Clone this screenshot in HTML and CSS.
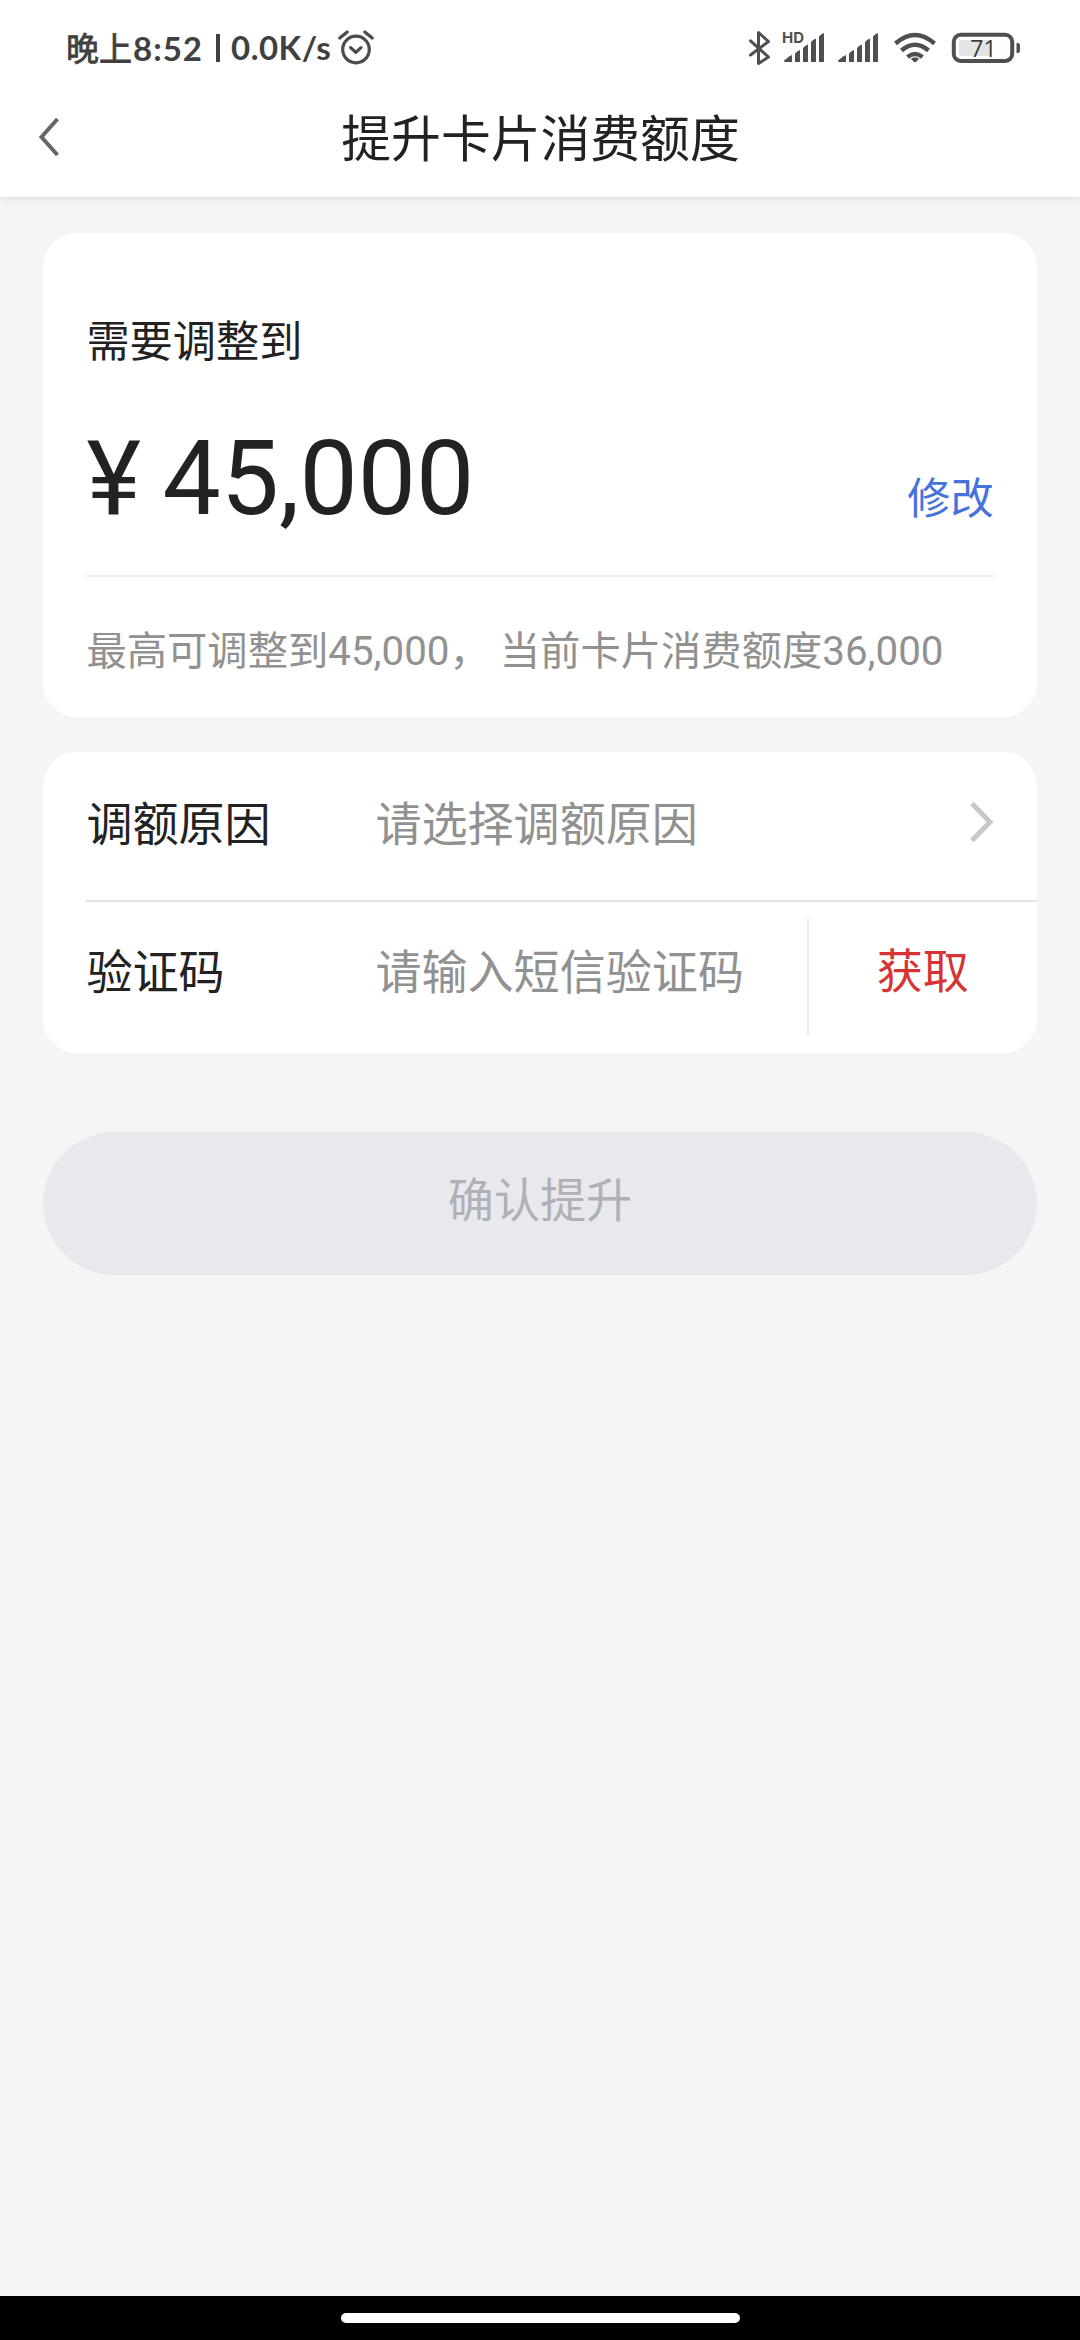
FILE: index.html
```html
<!DOCTYPE html>
<html lang="zh-CN">
<head>
<meta charset="utf-8">
<title>提升卡片消费额度</title>
<link rel="stylesheet" href="styles.css">
</head>
<body>
<div class="screen">
  <div class="statusbar">
    <div class="status-left">
      <span class="clock"><span class="period">晚上</span>8:52</span>
      <span class="separator"></span>
      <span class="speed">0.0K/s</span>
      <svg class="alarm" width="36" height="36" viewBox="0 0 36 36" fill="none" stroke="#4b4b4b" stroke-width="3.2" stroke-linecap="round" stroke-linejoin="round">
        <circle cx="18" cy="19.5" r="13.3"/>
        <path d="M12.6 17.6l5.2 4.800 5.200-4.800M1.800 8l7.400-6M34.200 8l-7.400-6"/>
      </svg>
    </div>
    <svg class="status-icons" width="280" height="40" viewBox="740 28 280 40" fill="#4f4f4f">
      <path d="M750.500 40.800L768.500 57L758.500 63.500V32.500L768.500 41.500L750.500 55" fill="none" stroke="#4f4f4f" stroke-width="3" stroke-linejoin="round" stroke-linecap="round"/>
      <text class="hd" x="782" y="43">HD</text>
      <g id="signal">
        <path d="M784 60.500l5.500-4.300 2.500-1.200v7h-6.500q-2-.2-1.500-1.500z"/>
        <path d="M795 53.500q2.300-2.800 5-3.500V62h-5zM803 48q2.300-2.700 5-3.500V62h-5zM811 42q2.300-2.700 5-3.500V62h-5zM819 36.500q2.300-2.700 5-3.500V62h-5z"/>
      </g>
      <use href="#signal" x="54"/>
      <g fill="none" stroke="#4f4f4f" stroke-width="4.500">
        <path d="M895.500 43.500q19.500-17 39 0M901.500 50.500q13.500-11.500 27 0M907.500 57q7.500-6 15 0"/>
      </g>
      <path d="M910.800 58.800q4.200-3.200 8.400 0l-3 3q-1.200 1-2.400 0z"/>
      <rect x="953.800" y="34.800" width="58.400" height="26.200" rx="7" fill="none" stroke="#4f4f4f" stroke-width="4"/>
      <rect x="959" y="40" width="32" height="16" rx="2" fill="#e4e4e4"/>
      <path d="M1016.500 43h1.500q2 0 2 2.500v5q0 2.500-2 2.500h-1.500z"/>
      <text class="battery" x="983.500" y="56.500" text-anchor="middle">71</text>
    </svg>
  </div>
  <header class="header">
    <svg class="back" width="24" height="40" viewBox="0 0 24 40" fill="none" stroke="#666" stroke-width="4"><path d="M21.500 2L5.500 20l16 18"/></svg>
    <h1 class="title">提升卡片消费额度</h1>
  </header>

  <main class="content">
    <section class="card amount-card">
      <div class="amount-label">需要调整到</div>
      <div class="amount-row">
        <div class="amount">¥ 45,000</div>
        <a class="edit">修改</a>
      </div>
      <div class="hint">最高可调整到45,000， 当前卡片消费额度36,000</div>
    </section>

    <section class="card form-card">
      <div class="row">
        <span class="row-label">调额原因</span>
        <span class="row-value">请选择调额原因</span>
        <svg class="arrow" width="26" height="42" viewBox="0 0 26 42" fill="none" stroke="#c8c8cc" stroke-width="5"><path d="M3 2.500L21 21 3 39.500"/></svg>
      </div>
      <div class="row row-code">
        <span class="row-label">验证码</span>
        <span class="row-value">请输入短信验证码</span>
        <a class="get-code">获取</a>
      </div>
    </section>

    <div class="submit">确认提升</div>
  </main>
  <div class="navbar"><span class="pill"></span></div>
</div>
</body>
</html>
```

FILE: styles.css
```css
* { box-sizing: border-box; }

body {
  margin: 0;
  font-family: Roboto, "Noto Sans CJK SC", sans-serif;
  color: #222;
  background: #f5f5f5;
}

.screen {
  display: flex;
  flex-direction: column;
  width: 1080px;
  height: 2340px;
  overflow: hidden;
}

.statusbar {
  position: relative;
  z-index: 1;
  display: flex;
  justify-content: space-between;
  height: 96px;
  padding: 28px 60px 0 66px;
  background: #fff;
  color: #404040;
}

.status-left {
  display: flex;
  align-items: center;
  height: 40px;
  font: 700 33px/40px Lato, "Noto Sans CJK SC", sans-serif;
  white-space: nowrap;
}

.clock, .speed { position: relative; top: -1px; }
.clock { width: 141px; letter-spacing: 1px; }

.period {
  margin-right: 1px;
  font: 400 33px/40px "Noto Sans CJK SC", sans-serif;
  letter-spacing: 0;
  -webkit-text-stroke: 0.8px #404040;
}

.separator { width: 4px; height: 28px; margin: 0 11px 0 9px; background: #404040; }
.speed { width: 107px; letter-spacing: 0.5px; }
.status-icons { display: block; }
.hd { font: 700 15px Inter, sans-serif; }
.battery { font: 400 23px "Open Sans", sans-serif; fill: #3c3c3c; }

.header {
  display: flex;
  align-items: center;
  height: 101px;
  padding: 0 36px 19px;
  background: #fff;
  box-shadow: 0 2px 6px rgba(0, 0, 0, 0.1);
}

.title {
  flex: 1;
  margin: 0 23px 0 0;
  padding-top: 5px;
  font-size: 49.8px;
  font-weight: 400;
  line-height: 72px;
  text-align: center;
}

.content {
  flex: 1;
  padding: 36px 43.2px 0;
}

.card {
  border-radius: 34px;
  background: #fff;
}

.amount-card {
  height: 484px;
  padding: 79px 43.2px 0;
}

.amount-label { font-size: 43.2px; line-height: 62px; }

.amount-row {
  display: flex;
  justify-content: space-between;
  height: 203px;
  border-bottom: 2px solid #ededed;
}

.amount {
  padding-top: 44px;
  font-size: 103.7px;
  line-height: 122px;
  word-spacing: -4px;
}

.edit {
  padding-top: 95px;
  font-size: 43.2px;
  line-height: 62px;
  color: #4672dd;
}

.hint {
  padding-top: 45px;
  font-size: 40.32px;
  line-height: 60px;
  color: #919191;
  white-space: pre;
}

.form-card {
  height: 301px;
  margin-top: 35px;
  padding-left: 43.2px;
}

.row {
  display: flex;
  align-items: center;
  height: 148px;
  padding-bottom: 3px;
  font-size: 46.08px;
  line-height: 66px;
}

.row-label { width: 289px; }
.row-value { flex: 1; color: #919191; }
.arrow { margin: 0 42px 6px 0; }

.row-code {
  height: 151px;
  padding-bottom: 0;
  border-top: 2px solid #e3e3e3;
}

.row-code .row-label, .row-code .row-value { padding-bottom: 8px; }

.get-code {
  width: 230px;
  height: 117px;
  border-left: 2px solid #ececec;
  color: #d73334;
  line-height: 109px;
  text-align: center;
}

.submit {
  height: 143px;
  margin-top: 79px;
  border-radius: 72px;
  background: #e8e9ee;
  color: #b0b1b5;
  font-size: 46.08px;
  line-height: 138px;
  text-align: center;
}

.navbar {
  display: flex;
  align-items: center;
  justify-content: center;
  height: 44px;
  background: #000;
}

.pill {
  width: 399px;
  height: 10px;
  border-radius: 5px;
  background: #fff;
}
```
